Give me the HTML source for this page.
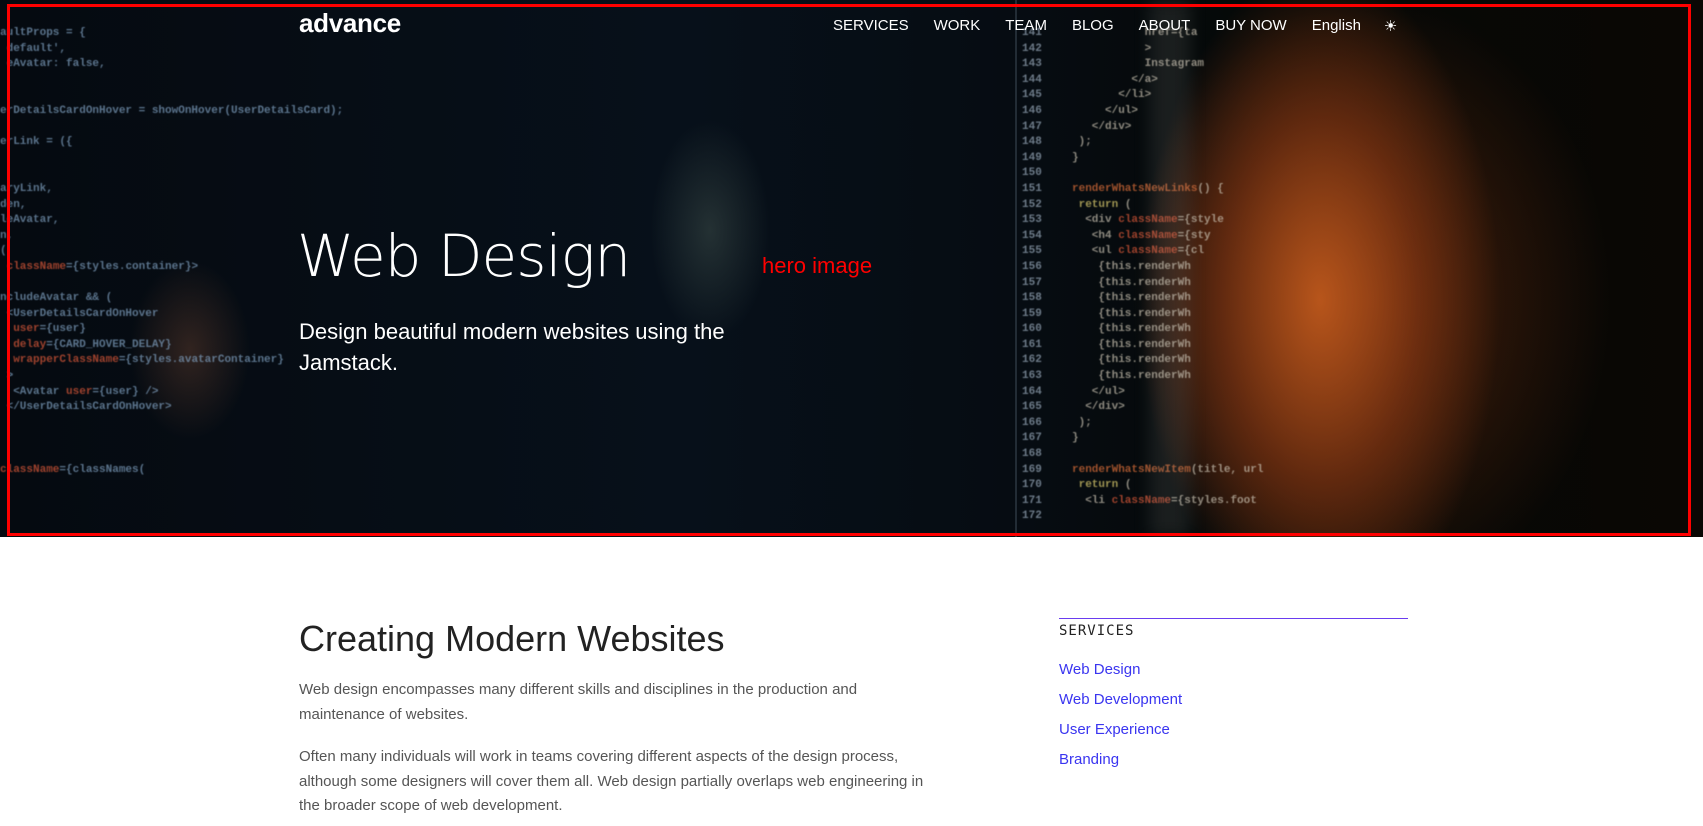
<!DOCTYPE html>
<html><head><meta charset="utf-8"><style>
*{margin:0;padding:0;box-sizing:border-box}
body{width:1703px;height:826px;overflow:hidden;background:#fff;font-family:"Liberation Sans",sans-serif;position:relative}
.hero{position:absolute;left:0;top:0;width:1703px;height:537px;overflow:hidden;
background:
radial-gradient(ellipse 180px 330px at 1320px 300px,rgba(205,95,30,.85),rgba(150,60,20,.55) 55%,transparent 100%),
radial-gradient(ellipse 300px 380px at 1370px 300px,rgba(120,50,15,.6),transparent 80%),
radial-gradient(ellipse 60px 110px at 710px 230px,rgba(90,110,100,.35),transparent 100%),
radial-gradient(ellipse 60px 90px at 190px 350px,rgba(150,90,60,.3),transparent 100%),
linear-gradient(90deg,#050a10 0%,#07101a 40%,#060c12 60%,#050806 75%,#0a0704 100%);}
.code{position:absolute;font-family:"Liberation Mono",monospace;font-size:11px;line-height:15.6px;color:#7fa0c0;opacity:.7;filter:blur(.6px);white-space:pre;font-weight:bold}
.border{position:absolute;left:7px;top:4px;width:1684px;height:532px;border:3px solid #f00}
.logo{position:absolute;left:299px;top:8px;color:#fff;font-weight:bold;font-size:26px;letter-spacing:-.3px}
.nav{position:absolute;top:17px;left:833px;color:#fff;font-size:15px;display:flex}
.nav span{margin-right:25px}
h1{position:absolute;left:297px;top:222px;color:#fff;font-size:58px;font-family:"DejaVu Sans","Liberation Sans",sans-serif;font-weight:200;letter-spacing:-1px}
.lbl{position:absolute;left:762px;top:253px;color:#f00;font-size:22px}
.sub{position:absolute;left:299px;top:316px;color:#fff;font-size:22px;line-height:31px;width:480px}
h2{position:absolute;left:299px;top:618px;font-weight:normal;font-size:36px;color:#222}
.p{position:absolute;left:299px;color:#555;font-size:15px;line-height:24.5px;width:640px}
.rule{position:absolute;left:1059px;top:618px;width:349px;height:1px;background:#6a3cf0}
.side{position:absolute;left:1059px;font-size:15px}
</style></head><body>
<div class="hero">
<div class="code" style="left:0;top:26px">aultProps = {
 default',
 eAvatar: false,


erDetailsCardOnHover = showOnHover(UserDetailsCard);

erLink = ({


aryLink,
den,
leAvatar,
n,
(
 <span style="color:#e05a3a">className</span>={styles.container}>

ncludeAvatar && (
 &lt;UserDetailsCardOnHover
  <span style="color:#e05a3a">user</span>={user}
  <span style="color:#e05a3a">delay</span>={CARD_HOVER_DELAY}
  <span style="color:#e05a3a">wrapperClassName</span>={styles.avatarContainer}
 &gt;
  &lt;Avatar <span style="color:#e05a3a">user</span>={user} /&gt;
 &lt;/UserDetailsCardOnHover&gt;



<span style="color:#e05a3a">className</span>={classNames(</div>
<div class="code" style="left:1022px;top:26px;color:#9ab">141
142
143
144
145
146
147
148
149
150
151
152
153
154
155
156
157
158
159
160
161
162
163
164
165
166
167
168
169
170
171
172</div>
<div class="code" style="left:1072px;top:26px;color:#c8c0b0">           href={ta
           &gt;
           Instagram
         &lt;/a&gt;
       &lt;/li&gt;
     &lt;/ul&gt;
   &lt;/div&gt;
 );
}

<span style="color:#e0703a">renderWhatsNewLinks</span>() {
 <span style="color:#e0d070">return</span> (
  &lt;div <span style="color:#e05a3a">className</span>={style
   &lt;h4 <span style="color:#e05a3a">className</span>={sty
   &lt;ul <span style="color:#e05a3a">className</span>={cl
    {this.renderWh
    {this.renderWh
    {this.renderWh
    {this.renderWh
    {this.renderWh
    {this.renderWh
    {this.renderWh
    {this.renderWh
   &lt;/ul&gt;
  &lt;/div&gt;
 );
}

<span style="color:#e0703a">renderWhatsNewItem</span>(title, url
 <span style="color:#e0d070">return</span> (
  &lt;li <span style="color:#e05a3a">className</span>={styles.foot</div>
<div style="position:absolute;left:1015px;top:0;width:2px;height:537px;background:rgba(120,140,160,.25)"></div>
<div style="position:absolute;left:1150px;top:0;width:40px;height:537px;background:rgba(180,180,170,.12);filter:blur(8px)"></div>
</div>
<div class="border"></div>
<div class="logo">advance</div>
<div class="nav"><span>SERVICES</span><span>WORK</span><span>TEAM</span><span>BLOG</span><span>ABOUT</span><span>BUY NOW</span><span>English</span><span style="margin-left:-2px">☀</span></div>
<h1>Web Design</h1>
<div class="lbl">hero image</div>
<div class="sub">Design beautiful modern websites using the Jamstack.</div>
<h2>Creating Modern Websites</h2>
<div class="p" style="top:678px">Web design encompasses many different skills and disciplines in the production and maintenance of websites.</div>
<div class="p" style="top:745px">Often many individuals will work in teams covering different aspects of the design process, although some designers will cover them all. Web design partially overlaps web engineering in the broader scope of web development.</div>
<div class="rule"></div>
<div class="side" style="top:623px;color:#222;letter-spacing:1px;font-family:'DejaVu Sans Mono','Liberation Mono',monospace;font-size:14px">SERVICES</div>
<div class="side" style="top:661px;color:#3a35f0">Web Design</div>
<div class="side" style="top:691px;color:#3a35f0">Web Development</div>
<div class="side" style="top:721px;color:#3a35f0">User Experience</div>
<div class="side" style="top:751px;color:#3a35f0">Branding</div>
</body></html>
